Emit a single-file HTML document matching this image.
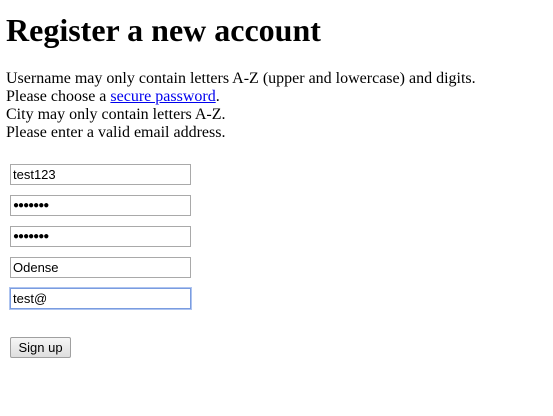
<!DOCTYPE html>
<html><head><style>
body{margin:0;font-family:"Liberation Serif",serif;font-size:16px;color:#000;background:#fff}
h1{position:absolute;left:6px;top:10px;margin:0;font-size:32px;font-weight:bold;line-height:40px}
.t{position:absolute;left:6px;top:70px;line-height:18px}
a{color:#00e}
.i{position:absolute;left:10px;width:181px;height:21px;box-sizing:border-box;border:1px solid #a9a9a9;font-family:"Liberation Sans",sans-serif;font-size:13px;padding:0 2px;line-height:19px}
.f{border:1px solid #7a9ce0;box-shadow:0 0 0 1px #aec4f0}
.b{position:absolute;left:10px;top:337px;width:61px;height:21px;box-sizing:border-box;border:1px solid #a0a0a0;background:linear-gradient(#f6f6f6,#dedede);font-family:"Liberation Sans",sans-serif;font-size:13px;text-align:center;line-height:19px;border-radius:2px}
</style></head><body>
<h1>Register a new account</h1>
<div class="t">Username may only contain letters A-Z (upper and lowercase) and digits.<br>Please choose a <a href="#">secure password</a>.<br>City may only contain letters A-Z.<br>Please enter a valid email address.</div>
<div class="i" style="top:164px">test123</div>
<div class="i" style="top:195px;font-size:10px;letter-spacing:-1px">●●●●●●●</div>
<div class="i" style="top:226px;font-size:10px;letter-spacing:-1px">●●●●●●●</div>
<div class="i" style="top:257px">Odense</div>
<div class="i f" style="top:288px">test@</div>
<div class="b">Sign up</div>
</body></html>
